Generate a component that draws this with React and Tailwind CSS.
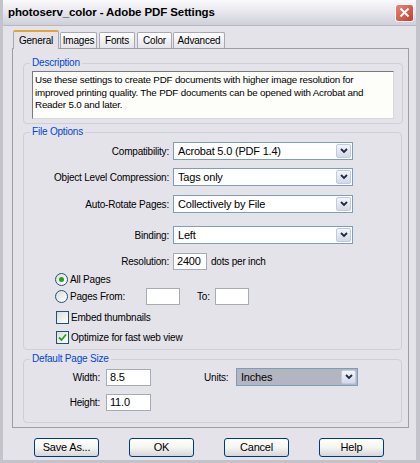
import React from "react";

const Chevron = () => (
  <svg width="8" height="6" viewBox="0 0 8 6">
    <path d="M1 1 L4 4 L7 1" fill="none" stroke="#1f2a44" strokeWidth="1.8" />
  </svg>
);

const Select = ({ value, width, grey }) => (
  <div
    className={`flex h-[18px] border border-[#7f9db9] ${
      grey ? "bg-[#b3b5c1]" : "bg-white"
    } ${width}`}
  >
    <div className="flex-1 flex items-center pl-[4px] text-[11px] leading-none">
      {value}
    </div>
    <div className="w-[15px] m-[1px] flex items-center justify-center rounded-[2px] border border-[#c3cadb] bg-gradient-to-b from-[#f3f5fa] to-[#d3d9e8]">
      <Chevron />
    </div>
  </div>
);

const Input = ({ value, width }) => (
  <div
    className={`h-[17px] border border-[#a5acb5] bg-white flex items-center pl-[3px] text-[11px] leading-none ${width}`}
  >
    {value}
  </div>
);

const Radio = ({ checked }) => (
  <div className="w-[13px] h-[13px] rounded-full border border-[#1c5180] bg-gradient-to-br from-[#dcdcd6] to-white flex items-center justify-center">
    {checked && <div className="w-[5px] h-[5px] rounded-full bg-[#21a121]" />}
  </div>
);

const Check = ({ checked }) => (
  <div className="w-[13px] h-[13px] border border-[#1c5180] bg-gradient-to-br from-[#dcdcd6] to-white flex items-center justify-center">
    {checked && (
      <svg width="9" height="9" viewBox="0 0 9 9">
        <path d="M1 4.5 L3.5 7 L8 1.5" fill="none" stroke="#21a121" strokeWidth="1.8" />
      </svg>
    )}
  </div>
);

const Group = ({ title, className = "", children }) => (
  <fieldset
    className={`border border-[#cfcfd6] rounded-[4px] w-[379px] ${className}`}
  >
    <legend className="ml-[6px] px-[2px] text-[#0046d5] leading-[12px]">
      {title}
    </legend>
    {children}
  </fieldset>
);

const Row = ({ label, children, className = "" }) => (
  <div className={`flex items-center ${className}`}>
    <div className="w-[146px] text-right pr-[1px]">{label}</div>
    <div className="ml-[3px] flex items-center">{children}</div>
  </div>
);

const Button = ({ children }) => (
  <button className="w-[65px] h-[19px] rounded-[3px] border border-[#003c74] bg-gradient-to-b from-white via-[#f4f4f0] to-[#d6d6dc] text-[11px] leading-none">
    {children}
  </button>
);

const tabs = [
  { name: "Images", w: "w-[37px]", ml: "ml-[1px]" },
  { name: "Fonts", w: "w-[36px]", ml: "ml-[2px]" },
  { name: "Color", w: "w-[35px]", ml: "ml-[2px]" },
  { name: "Advanced", w: "w-[52px]", ml: "ml-[1px]" },
];

export default function App() {
  return (
    <div className="w-[420px] h-[463px] overflow-hidden bg-[#e4e3e9] text-black text-[10px] tracking-[-0.2px] font-['Liberation_Sans',Arial,sans-serif] flex flex-col border-l-[3px] border-r-[4px] border-b-[3px] border-[#c4c3cb]">
      {/* title bar */}
      <div className="h-[26px] shrink-0 flex items-center justify-between pl-[5px] pr-[2px] bg-gradient-to-b from-[#fafafc] via-[#e6e6ec] to-[#cfcfd8] border-b border-[#b8b8c2]">
        <span className="font-bold text-[11.5px] tracking-[-0.1px]">
          photoserv_color - Adobe PDF Settings
        </span>
        <div className="w-[19px] h-[18px] rounded-[3px] border border-white bg-gradient-to-br from-[#e8867a] to-[#c3392b] flex items-center justify-center">
          <svg width="11" height="11" viewBox="0 0 11 11">
            <path d="M1.5 1.5 L9.5 9.5 M9.5 1.5 L1.5 9.5" stroke="white" strokeWidth="2" />
          </svg>
        </div>
      </div>

      {/* tabs */}
      <div className="flex items-end ml-[10px] mt-[3px] h-[19px] text-[10px]">
        <div className="w-[46px] h-[19px] justify-center border border-b-0 border-[#a8a8b4] border-t-[2px] border-t-[#e6a23a] rounded-t-[2px] bg-[#e4e3e9] relative z-10 flex items-center -mb-[1px] pb-[1px]">
          General
        </div>
        {tabs.map((t) => (
          <div
            key={t.name}
            className={`h-[16px] justify-center border border-b-0 border-[#a8a8b4] rounded-t-[2px] bg-gradient-to-b from-white to-[#e4e4ea] flex items-center ${t.w} ${t.ml}`}
          >
            {t.name}
          </div>
        ))}
      </div>

      {/* panel */}
      <div className="ml-[9px] w-[397px] h-[380px] border border-[#9d9da8] pl-[10px] pt-[8px]">
        <Group title="Description" className="pb-[4px]">
          <div className="mx-[8px] mt-[2px] w-[362px] h-[48px] border border-[#7a7a7a] border-r-[#d8d8d8] border-b-[#d8d8d8] bg-[#fdfdf9] px-[2px] pt-[2px] leading-[12.5px] text-[9.8px]">
            Use these settings to create PDF documents with higher image resolution for
            improved printing quality. The PDF documents can be opened with Acrobat and
            Reader 5.0 and later.
          </div>
        </Group>

        <Group title="File Options" className="mt-[2px] pb-[5px]">
          <Row label="Compatibility:" className="mt-[4px]">
            <Select value="Acrobat 5.0 (PDF 1.4)" width="w-[180px]" />
          </Row>
          <Row label="Object Level Compression:" className="mt-[8px]">
            <Select value="Tags only" width="w-[180px]" />
          </Row>
          <Row label="Auto-Rotate Pages:" className="mt-[9px]">
            <Select value="Collectively by File" width="w-[180px]" />
          </Row>
          <Row label="Binding:" className="mt-[13px]">
            <Select value="Left" width="w-[180px]" />
          </Row>
          <Row label="Resolution:" className="mt-[9px]">
            <Input value="2400" width="w-[34px]" />
            <span className="ml-[4px]">dots per inch</span>
          </Row>
          <div className="pl-[31px] mt-[3px] flex items-center h-[13px]">
            <Radio checked />
            <span className="ml-[2px]">All Pages</span>
          </div>
          <div className="pl-[31px] mt-[2px] flex items-center h-[17px]">
            <Radio />
            <span className="ml-[2px] w-[76px]">Pages From:</span>
            <Input width="w-[34px]" />
            <span className="ml-[17px] w-[18px]">To:</span>
            <Input width="w-[34px]" />
          </div>
          <div className="pl-[32px] mt-[6px] flex items-center h-[13px]">
            <Check />
            <span className="ml-[2px]">Embed thumbnails</span>
          </div>
          <div className="pl-[32px] mt-[7px] flex items-center h-[13px]">
            <Check checked />
            <span className="ml-[2px]">Optimize for fast web view</span>
          </div>
        </Group>

        <Group title="Default Page Size" className="mt-[3px] pb-[11px]">
          <div className="flex items-center mt-[3px]">
            <div className="w-[76px] text-right">Width:</div>
            <div className="ml-[6px]">
              <Input value="8.5" width="w-[45px]" />
            </div>
            <div className="ml-[53px] w-[32px]">Units:</div>
            <Select value="Inches" width="w-[122px]" grey />
          </div>
          <div className="flex items-center mt-[8px]">
            <div className="w-[76px] text-right">Height:</div>
            <div className="ml-[6px]">
              <Input value="11.0" width="w-[45px]" />
            </div>
          </div>
        </Group>
      </div>

      {/* buttons */}
      <div className="flex mt-[10px] ml-[31px] gap-[30px]">
        <Button>Save As...</Button>
        <Button>OK</Button>
        <Button>Cancel</Button>
        <Button>Help</Button>
      </div>
    </div>
  );
}
